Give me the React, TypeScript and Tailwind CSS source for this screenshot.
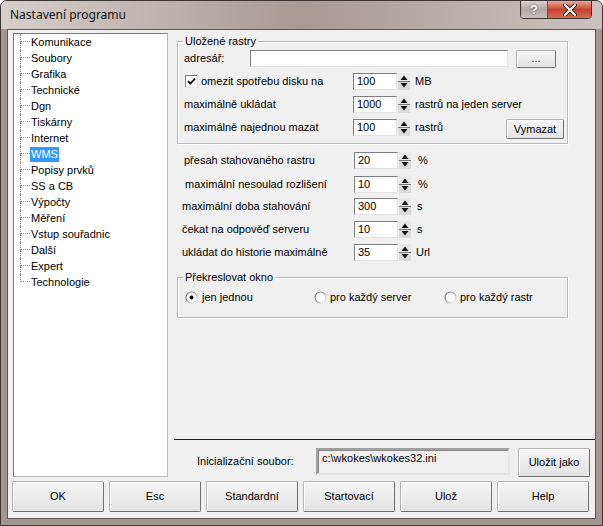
import React from "react";

const treeItems = [
  "Komunikace",
  "Soubory",
  "Grafika",
  "Technické",
  "Dgn",
  "Tiskárny",
  "Internet",
  "WMS",
  "Popisy prvků",
  "SS a CB",
  "Výpočty",
  "Měření",
  "Vstup souřadnic",
  "Další",
  "Expert",
  "Technologie",
];

function SpinArrows() {
  return (
    <svg width="12" height="17" viewBox="0 0 12 17" className="ml-[1px] shrink-0">
      <rect x="0" y="0" width="12" height="17" fill="#dcdcdc" />
      <rect x="0" y="0" width="12" height="8" fill="#e8e8e8" />
      <line x1="0" y1="8.5" x2="12" y2="8.5" stroke="#7a7a7a" />
      <path d="M2.5 7 L6 2.5 L9.5 7 Z" fill="#111" />
      <path d="M2.5 10 L9.5 10 L6 14.5 Z" fill="#111" />
    </svg>
  );
}

function Spin({ value }: { value: string }) {
  return (
    <div className="flex h-[17px] shrink-0">
      <div className="w-[44px] h-[17px] bg-white border border-t-[#7f7f7f] border-l-[#7f7f7f] border-r-[#e3e3e3] border-b-[#e3e3e3] pl-[3px] leading-[15px]">
        {value}
      </div>
      <SpinArrows />
    </div>
  );
}

function Btn({ children, className }: { children: React.ReactNode; className: string }) {
  return (
    <div
      className={
        "flex items-center justify-center shrink-0 rounded-[2px] border border-[#b4b4b4] border-r-[#707070] border-b-[#707070] bg-gradient-to-b from-[#f6f6f6] to-[#e3e3e3] shadow-[inset_1px_1px_0_#ffffff] " +
        className
      }
    >
      {children}
    </div>
  );
}

function CheckBox() {
  return (
    <svg width="13" height="13" viewBox="0 0 13 13" className="shrink-0">
      <rect x="0" y="0" width="13" height="13" fill="#e3e3e3" />
      <rect x="0" y="0" width="12" height="12" fill="#808080" />
      <rect x="1" y="1" width="11" height="11" fill="#ffffff" />
      <path d="M3 6.2 L5.3 8.6 L10 3.6" stroke="#000" strokeWidth="1.8" fill="none" />
    </svg>
  );
}

function Radio({ checked }: { checked?: boolean }) {
  return (
    <svg width="13" height="13" viewBox="0 0 13 13" className="shrink-0">
      <defs>
        <linearGradient id="rg" x1="0" y1="0" x2="1" y2="1">
          <stop offset="0" stopColor="#6a6a6a" />
          <stop offset="0.5" stopColor="#9a9a9a" />
          <stop offset="1" stopColor="#ffffff" />
        </linearGradient>
      </defs>
      <circle cx="6.5" cy="6.5" r="5.5" fill="#ffffff" stroke="url(#rg)" strokeWidth="1.2" />
      {checked && <circle cx="6.5" cy="6.5" r="2" fill="#000" />}
    </svg>
  );
}

export default function App() {
  return (
    <div className="w-[603px] h-[526px] flex flex-col bg-[#a3958f] border border-[#3a3432] rounded-t-[7px] overflow-hidden font-['Liberation_Sans',Arial,sans-serif] text-[11px] text-black">
      {/* title bar */}
      <div className="h-[28px] flex items-start shrink-0 bg-gradient-to-r from-[#d6cfcc] via-[#a89a95] to-[#cbc2bf]">
        <span className="ml-[9px] mt-[6px] text-[12px] leading-[16px] font-['Noto_Sans',Arial,sans-serif] text-[#111]">
          Nastavení programu
        </span>
        <div className="ml-auto mr-[10px] flex h-[19px] -mt-px rounded-b-[4px] border border-[#3d3535] overflow-hidden">
          <div className="w-[27px] flex items-center justify-center bg-gradient-to-b from-[#d8d2d0] via-[#b2a8a5] to-[#c9c2c0] border-r border-[#5a4f4c] text-white font-bold text-[13px] leading-none [text-shadow:0_0_2px_#333]">
            ?
          </div>
          <div className="w-[43px] flex items-center justify-center bg-gradient-to-b from-[#e9a99b] via-[#c7402c] to-[#d66a54]">
            <svg width="14" height="12" viewBox="0 0 14 12">
              <path d="M2 1 L12 11 M12 1 L2 11" stroke="#3b1a14" strokeWidth="4" strokeLinecap="round" />
              <path d="M2 1 L12 11 M12 1 L2 11" stroke="#ffffff" strokeWidth="2.2" strokeLinecap="round" />
            </svg>
          </div>
        </div>
      </div>

      {/* client area */}
      <div className="mx-[6px] h-[490px] border border-[#5f5653] bg-[#f0f0f0] flex flex-col pt-[3px]">
        <div className="flex h-[444px]">
          {/* tree */}
          <div className="ml-[5px] w-[155px] h-[444px] bg-white border border-t-[#7c7c7c] border-l-[#7c7c7c] border-r-[#b8b8b8] border-b-[#b8b8b8] pl-[6px]">
            {treeItems.map((item, i) => (
              <div key={item} className="flex h-[16px]">
                <div className="flex flex-col w-[10px] shrink-0">
                  <div className="h-[8px] border-l border-b border-dotted border-[#8c8c8c]" />
                  <div
                    className={
                      i < treeItems.length - 1 ? "h-[8px] border-l border-dotted border-[#8c8c8c]" : "h-[8px]"
                    }
                  />
                </div>
                <span
                  className={
                    item === "WMS"
                      ? "px-[1px] h-[15px] mt-[1px] leading-[14px] bg-[#3399ff] text-white"
                      : "px-[1px] leading-[16px]"
                  }
                >
                  {item}
                </span>
              </div>
            ))}
          </div>

          {/* right panel */}
          <div className="ml-[6px] flex-1 flex flex-col">
            {/* group 1 */}
            <div className="mt-[8px] ml-[3px] w-[391px] border border-[#b9b9b9] shadow-[inset_1px_1px_0_#ffffff,1px_1px_0_#ffffff] pb-[4px]">
              <div className="-mt-[7px] ml-[5px] px-[2px] w-fit h-[13px] leading-[13px] bg-[#f0f0f0]">Uložené rastry</div>
              <div className="mt-[1px] h-[19px] flex items-center pl-[6px]">
                <span className="w-[66px]">adresář:</span>
                <div className="w-[258px] h-[17px] bg-white border border-t-[#7f7f7f] border-l-[#7f7f7f] border-r-[#e3e3e3] border-b-[#e3e3e3]" />
                <Btn className="ml-[8px] w-[40px] h-[18px] text-[#333]">...</Btn>
              </div>
              <div className="mt-[5px] h-[17px] flex items-center pl-[6px]">
                <div className="w-[169px] flex items-center">
                  <span className="ml-[1px]">
                    <CheckBox />
                  </span>
                  <span className="ml-[3px]">omezit spotřebu disku na</span>
                </div>
                <Spin value="100" />
                <span className="ml-[5px]">MB</span>
              </div>
              <div className="mt-[6px] h-[17px] flex items-center pl-[6px]">
                <span className="w-[169px]">maximálně ukládat</span>
                <Spin value="1000" />
                <span className="ml-[5px]">rastrů na jeden server</span>
              </div>
              <div className="mt-[6px] h-[20px] flex items-start pl-[6px]">
                <span className="w-[169px] h-[17px] flex items-center">maximálně najednou mazat</span>
                <Spin value="100" />
                <span className="ml-[5px] h-[17px] flex items-center">rastrů</span>
                <Btn className="ml-auto mr-[3px] w-[58px] h-[20px]">Vymazat</Btn>
              </div>
            </div>

            {/* loose fields */}
            <div className="mt-[8px] h-[17px] flex items-center">
              <span className="w-[180px] pl-[10px]">přesah stahovaného rastru</span>
              <Spin value="20" />
              <span className="ml-[7px]">%</span>
            </div>
            <div className="mt-[7px] h-[17px] flex items-center">
              <span className="w-[180px] pl-[11px]">maximální nesoulad rozlišení</span>
              <Spin value="10" />
              <span className="ml-[7px]">%</span>
            </div>
            <div className="mt-[5px] h-[17px] flex items-center">
              <span className="w-[180px] pl-[8px]">maximální doba stahování</span>
              <Spin value="300" />
              <span className="ml-[6px]">s</span>
            </div>
            <div className="mt-[6px] h-[17px] flex items-center">
              <span className="w-[180px] pl-[8px]">čekat na odpověď serveru</span>
              <Spin value="10" />
              <span className="ml-[6px]">s</span>
            </div>
            <div className="mt-[6px] h-[17px] flex items-center">
              <span className="w-[180px] pl-[8px]">ukládat do historie maximálně</span>
              <Spin value="35" />
              <span className="ml-[5px]">Url</span>
            </div>

            {/* group 2 */}
            <div className="mt-[16px] ml-[3px] w-[391px] border border-[#b9b9b9] shadow-[inset_1px_1px_0_#ffffff,1px_1px_0_#ffffff] pb-[13px]">
              <div className="-mt-[7px] ml-[5px] px-[2px] w-fit h-[13px] leading-[13px] bg-[#f0f0f0]">Překreslovat okno</div>
              <div className="mt-[7px] h-[13px] flex items-center pl-[7px]">
                <div className="w-[129px] flex items-center">
                  <Radio checked />
                  <span className="ml-[4px]">jen jednou</span>
                </div>
                <div className="w-[130px] flex items-center">
                  <Radio />
                  <span className="ml-[3px]">pro každý server</span>
                </div>
                <div className="flex items-center">
                  <Radio />
                  <span className="ml-[3px]">pro každý rastr</span>
                </div>
              </div>
            </div>

            <div className="flex-1" />
            <div className="h-px bg-[#1c1c1c]" />
            <div className="mt-[8px] h-[29px] flex items-start pb-[2px]">
              <span className="ml-[23px] w-[119px] h-[27px] flex items-center">Inicializační soubor:</span>
              <div className="w-[194px] h-[27px] border-2 border-t-[#a0a0a0] border-l-[#a0a0a0] border-r-[#e6e6e6] border-b-[#e6e6e6] shadow-[inset_1px_1px_0_#8a8a8a] pl-[4px] pt-[2px] leading-[13px]">
                c:\wkokes\wkokes32.ini
              </div>
              <Btn className="ml-[8px] w-[72px] h-[29px]">Uložit jako</Btn>
            </div>
          </div>
        </div>

        {/* bottom buttons */}
        <div className="mt-[4px] pl-[4px] flex gap-[5px]">
          <Btn className="w-[92px] h-[31px]">OK</Btn>
          <Btn className="w-[92px] h-[31px]">Esc</Btn>
          <Btn className="w-[92px] h-[31px]">Standardní</Btn>
          <Btn className="w-[92px] h-[31px]">Startovací</Btn>
          <Btn className="w-[92px] h-[31px]">Ulož</Btn>
          <Btn className="w-[92px] h-[31px]">Help</Btn>
        </div>
      </div>
    </div>
  );
}
